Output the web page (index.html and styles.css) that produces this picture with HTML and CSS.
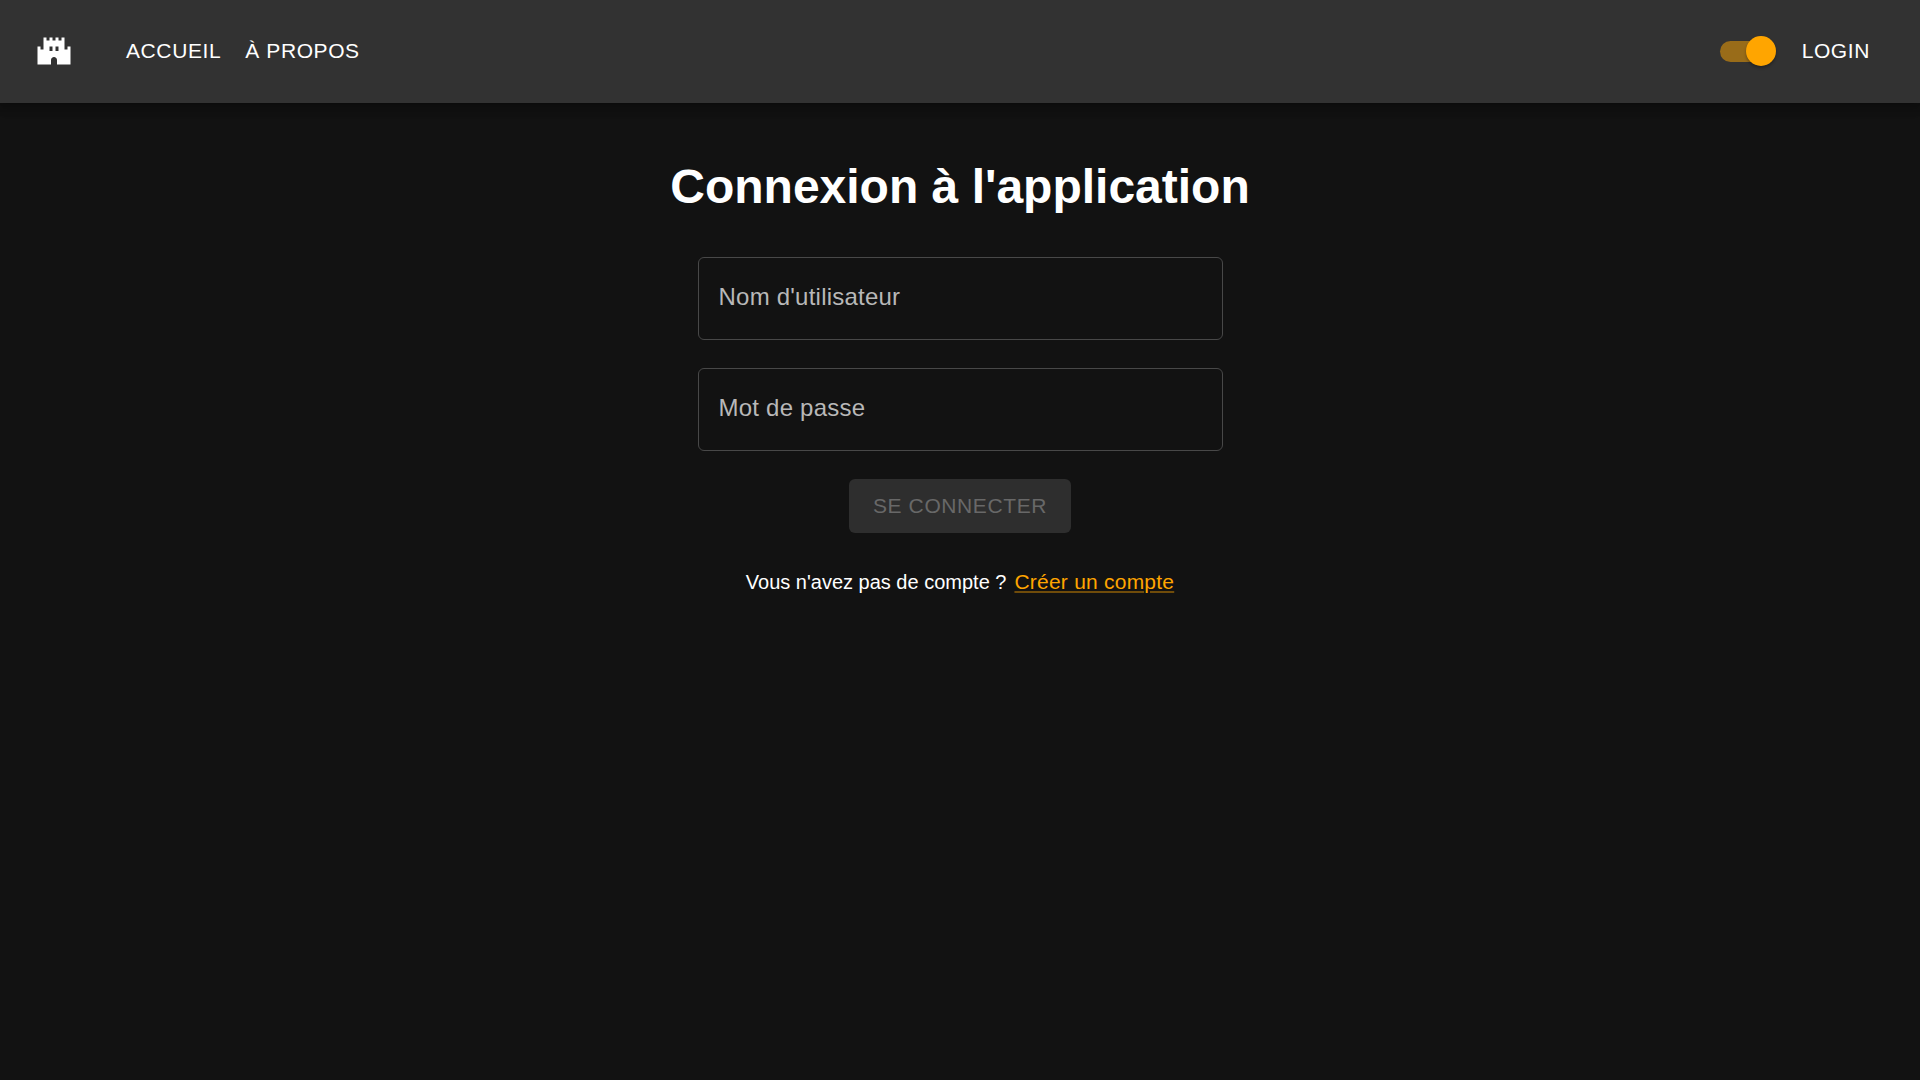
FILE: index.html
```html
<!DOCTYPE html>
<html lang="fr">
<head>
  <meta charset="utf-8">
  <meta name="viewport" content="width=device-width, initial-scale=1">
  <title>Connexion</title>
  <link rel="stylesheet" href="styles.css">
</head>
<body>
  <header class="app-bar">
    <a class="logo" href="#" aria-label="Accueil">
      <svg class="logo-icon" viewBox="0 0 24 24" aria-hidden="true">
        <path d="M21 9v2h-2V3h-2v2h-2V3h-2v2h-2V3H9v2H7V3H5v8H3V9H1v12h9v-3c0-1.100.9-2 2-2s2 .9 2 2v3h9V9h-2zM11 12H9V9h2v3zm4 0h-2V9h2v3z"/>
      </svg>
    </a>
    <nav class="nav">
      <a class="nav-link" href="#">ACCUEIL</a>
      <a class="nav-link" href="#">À PROPOS</a>
    </nav>
    <div class="actions">
      <input class="switch" type="checkbox" role="switch" aria-label="Mode sombre" checked>
      <a class="nav-link" href="#">LOGIN</a>
    </div>
  </header>
  <main class="login">
    <h1 class="title">Connexion à l'application</h1>
    <form class="form">
      <div class="field">
        <input class="field-input" id="username" type="text" placeholder=" ">
        <label class="field-label" for="username">Nom d'utilisateur</label>
      </div>
      <div class="field">
        <input class="field-input" id="password" type="password" placeholder=" ">
        <label class="field-label" for="password">Mot de passe</label>
      </div>
      <button class="submit" type="submit" disabled>SE CONNECTER</button>
    </form>
    <p class="signup"><span>Vous n'avez pas de compte ?</span> <a class="signup-link" href="#">Créer un compte</a></p>
  </main>
</body>
</html>
```
FILE: styles.css
```css
* {
  box-sizing: border-box;
}

body {
  margin: 0;
  min-height: 100vh;
  background: #121212;
  color: #fff;
  font-family: "Liberation Sans", Arial, sans-serif;
  font-size: 20px;
}

.app-bar {
  display: flex;
  align-items: center;
  padding: 24px 38px 25px 36px;
  background: #323232;
  box-shadow: 0 3px 6px rgba(0, 0, 0, 0.2), 0 6px 8px rgba(0, 0, 0, 0.14), 0 2px 15px rgba(0, 0, 0, 0.12);
}

.logo {
  display: flex;
  margin-right: 42px;
  color: #fff;
}

.logo-icon {
  width: 36px;
  height: 36px;
  fill: currentColor;
}

.nav {
  display: flex;
}

.nav-link {
  padding: 9px 12px;
  color: #fff;
  font-size: 21px;
  line-height: 36px;
  letter-spacing: 0.02857em;
  text-decoration: none;
}

.actions {
  display: flex;
  align-items: center;
  gap: 14px;
  margin-left: auto;
}

.switch {
  appearance: none;
  display: grid;
  align-items: center;
  width: 56px;
  height: 30px;
  margin: 0;
  cursor: pointer;
}

.switch::before,
.switch::after {
  content: "";
  grid-area: 1 / 1;
}

.switch::before {
  width: 51px;
  height: 21px;
  border-radius: 11px;
  background: rgba(255, 165, 0, 0.5);
}

.switch::after {
  justify-self: start;
  width: 30px;
  height: 30px;
  border-radius: 50%;
  background: #ffa500;
  box-shadow: 0 2px 3px rgba(0, 0, 0, 0.3);
}

.switch:checked::after {
  justify-self: end;
}

.login {
  display: flex;
  flex-direction: column;
  align-items: center;
  padding: 56px 24px;
}

.title {
  margin: 0 0 42px;
  font-size: 48px;
  line-height: 56px;
  text-align: center;
}

.form {
  display: flex;
  flex-direction: column;
  align-items: center;
  gap: 28px;
  width: 100%;
  max-width: 525px;
}

.field {
  position: relative;
  width: 100%;
}

.field-input {
  display: block;
  width: 100%;
  padding: 24px 20px;
  border: 1px solid #484848;
  border-radius: 6px;
  background: transparent;
  color: #fff;
  font: inherit;
  font-size: 24px;
  line-height: 33px;
}

.field-label {
  position: absolute;
  top: 24px;
  left: 21px;
  color: #b8b8b8;
  font-size: 24px;
  line-height: 32px;
  letter-spacing: 0.00938em;
  pointer-events: none;
}

.field-input:focus + .field-label,
.field-input:not(:placeholder-shown) + .field-label {
  top: -16px;
  padding: 0 4px;
  background: #121212;
  font-size: 18px;
}

.submit {
  padding: 9px 24px;
  border: 0;
  border-radius: 6px;
  background: #2e2e2e;
  color: #686868;
  font: inherit;
  font-size: 21px;
  line-height: 36px;
  letter-spacing: 0.02857em;
}

.signup {
  display: flex;
  flex-wrap: wrap;
  align-items: baseline;
  justify-content: center;
  gap: 8px;
  margin: 33px 0 0;
  line-height: 32px;
}

.signup-link {
  color: #ffa500;
  font-size: 21px;
  letter-spacing: 0.01071em;
  text-decoration-color: rgba(255, 165, 0, 0.4);
}
```
